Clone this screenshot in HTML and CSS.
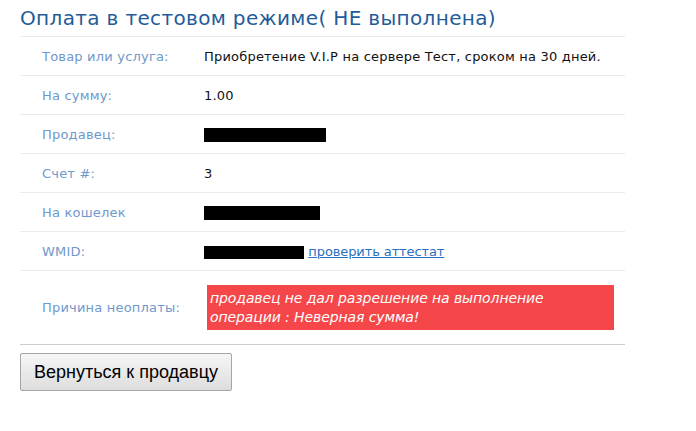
FILE: index.html
```html
<!DOCTYPE html>
<html lang="ru">
<head>
<meta charset="utf-8">
<title>Оплата</title>
<link rel="stylesheet" href="styles.css">
</head>
<body>
<div class="page">
  <h1 class="title">Оплата в тестовом режиме( НЕ выполнена)</h1>
  <table class="info">
    <tr><td class="label">Товар или услуга:</td><td class="value">Приобретение V.I.P на сервере Тест, сроком на 30 дней.</td></tr>
    <tr><td class="label">На сумму:</td><td class="value">1.00</td></tr>
    <tr><td class="label">Продавец:</td><td class="value"><span class="redact r-seller"></span></td></tr>
    <tr><td class="label">Счет #:</td><td class="value">3</td></tr>
    <tr><td class="label">На кошелек</td><td class="value"><span class="redact r-purse"></span></td></tr>
    <tr><td class="label">WMID:</td><td class="value"><span class="redact r-wmid"></span> <a class="link" href="#">проверить аттестат</a></td></tr>
    <tr class="reason"><td class="label">Причина неоплаты:</td><td class="value"><div class="error">продавец не дал разрешение на выполнение операции : Неверная сумма!</div></td></tr>
  </table>
  <button class="back">Вернуться к продавцу</button>
</div>
</body>
</html>
```
FILE: styles.css
```css
html, body { margin: 0; padding: 0; background: #fff; }
body { font-family: "DejaVu Sans", Verdana, sans-serif; }
.page { padding-left: 20px; width: 605px; }
.title {
  margin: 0;
  height: 36px;
  line-height: 36px;
  font-size: 20px;
  letter-spacing: 0.35px;
  font-weight: normal;
  color: #1f5c99;
  white-space: nowrap;
}
.info { width: 605px; border-collapse: collapse; font-size: 13px; }
.info td { border-top: 1px solid #ebebeb; height: 38px; padding: 0; vertical-align: middle; }
.info .label { width: 162px; padding-left: 22px; color: #6f98cc; letter-spacing: 0.2px; }
.info .value { color: #111; letter-spacing: 0.2px; }
.info .reason td { height: 73px; border-bottom: 1px solid #cccccc; }
.redact { display: inline-block; background: #000; height: 14px; vertical-align: middle; }
.r-seller { width: 122px; }
.r-purse { width: 116px; }
.r-wmid { width: 100px; height: 13px; }
.link { color: #2a6fc0; text-decoration: underline; letter-spacing: -0.1px; }
.error {
  margin-left: 3px;
  width: 401px;
  padding: 4px 3px;
  background: #f5474a;
  color: #fff;
  font-style: italic;
  font-size: 14px;
  letter-spacing: -0.1px;
  line-height: 19px;
  height: 37px;
}
.back {
  margin-top: 8px;
  width: 212px;
  height: 38px;
  font-family: "Liberation Sans", Arial, sans-serif;
  font-size: 18px;
  color: #000;
  background: linear-gradient(#f6f6f6, #dddddd);
  border: 1px solid #a6a6a6;
  border-radius: 2px;
  padding: 0;
}
```
